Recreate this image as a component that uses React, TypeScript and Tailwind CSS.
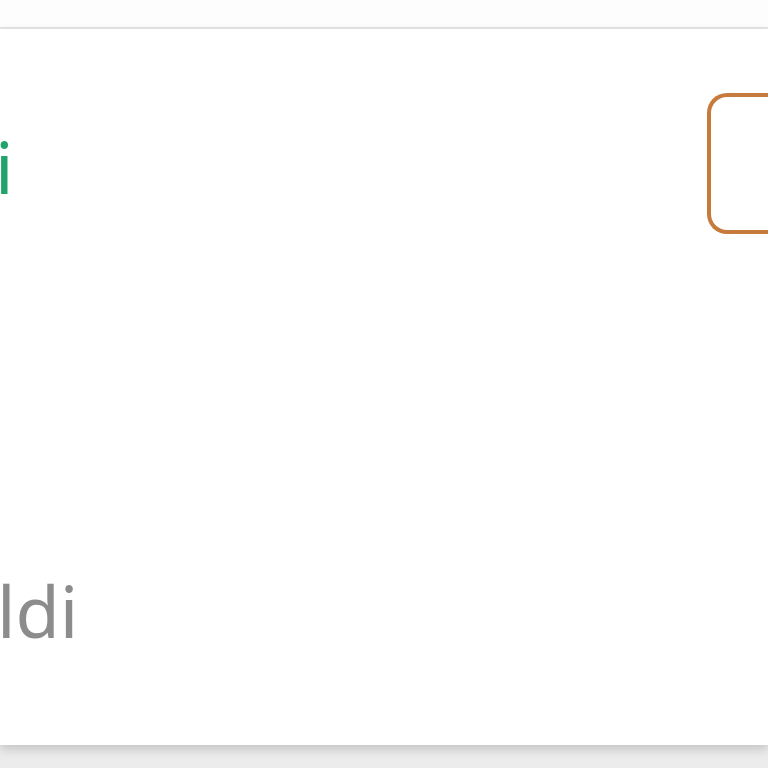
import React from "react";

const App = () => {
  return (
    <div
      className="w-[768px] h-[768px] bg-[#ececec] flex flex-col overflow-hidden"
      style={{ fontFamily: '"Noto Sans", "Open Sans", sans-serif' }}
    >
      {/* top strip */}
      <div className="h-[29px] bg-[#fdfdfd] border-b-2 border-[#e6e6e6] shrink-0" />

      {/* card */}
      <div className="h-[716px] w-full bg-white shrink-0 flex flex-col overflow-hidden shadow-[0_4px_10px_rgba(0,0,0,0.18)]">
        <div className="mt-[64px] h-[141px] flex items-center justify-between overflow-hidden shrink-0">
          <span className="text-[72px] leading-[72px] text-[#22a36b] -ml-[5px] mt-[5px]">i</span>
          <div className="w-[61px] h-[141px] border-[4px] border-r-0 border-[#c67b3c] rounded-l-[20px] shrink-0" />
        </div>

        <div className="mt-auto mb-[99px] shrink-0">
          <span className="block text-[72px] leading-[72px] text-[#8c8c8c] -ml-[3px]">ldi</span>
        </div>
      </div>
    </div>
  );
};

export default App;
